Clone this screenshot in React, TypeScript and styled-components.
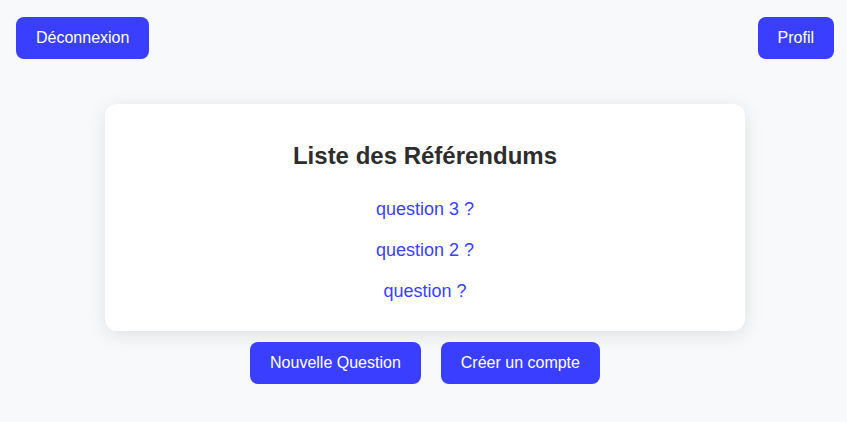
import React from "react";
import styled, { createGlobalStyle } from "styled-components";

const Global = createGlobalStyle`
  html, body { margin: 0; padding: 0; overflow: hidden; }
  body { background: #f8f9fb; font-family: "Liberation Sans", Arial, sans-serif; }
`;

const Page = styled.div`
  width: 850px;
  min-height: 422px;
  display: flex;
  flex-direction: column;
  align-items: center;
`;

const Header = styled.header`
  align-self: stretch;
  display: flex;
  justify-content: space-between;
  padding: 17px 16px 0;
`;

const Button = styled.button`
  background: #3a3fff;
  color: #ffffff;
  border: none;
  border-radius: 8px;
  padding: 0 20px;
  height: 42px;
  font-family: "Liberation Sans", Arial, sans-serif;
  font-size: 16px;
  cursor: pointer;
`;

const Card = styled.section`
  margin-top: 45px;
  width: 640px;
  height: 227px;
  box-sizing: border-box;
  background: #ffffff;
  border-radius: 12px;
  box-shadow: 0 4px 20px rgba(0, 0, 0, 0.1);
  padding: 38px 20px 0;
  display: flex;
  flex-direction: column;
  align-items: center;
`;

const Title = styled.h2`
  margin: 0 0 29px;
  font-size: 24px;
  line-height: 28px;
  font-weight: 700;
  color: #2d2d2d;
`;

const List = styled.ul`
  list-style: none;
  margin: 0;
  padding: 0;
  display: flex;
  flex-direction: column;
  align-items: center;
  gap: 20px;
`;

const Link = styled.a`
  color: #3a3fff;
  font-size: 18px;
  line-height: 21px;
  text-decoration: none;
`;

const Actions = styled.div`
  margin-top: 11px;
  display: flex;
  gap: 20px;
`;

export default function App() {
  return (
    <>
      <Global />
      <Page>
        <Header>
          <Button>Déconnexion</Button>
          <Button>Profil</Button>
        </Header>
        <Card>
          <Title>Liste des Référendums</Title>
          <List>
            <li><Link href="#">question 3 ?</Link></li>
            <li><Link href="#">question 2 ?</Link></li>
            <li><Link href="#">question ?</Link></li>
          </List>
        </Card>
        <Actions>
          <Button>Nouvelle Question</Button>
          <Button>Créer un compte</Button>
        </Actions>
      </Page>
    </>
  );
}
